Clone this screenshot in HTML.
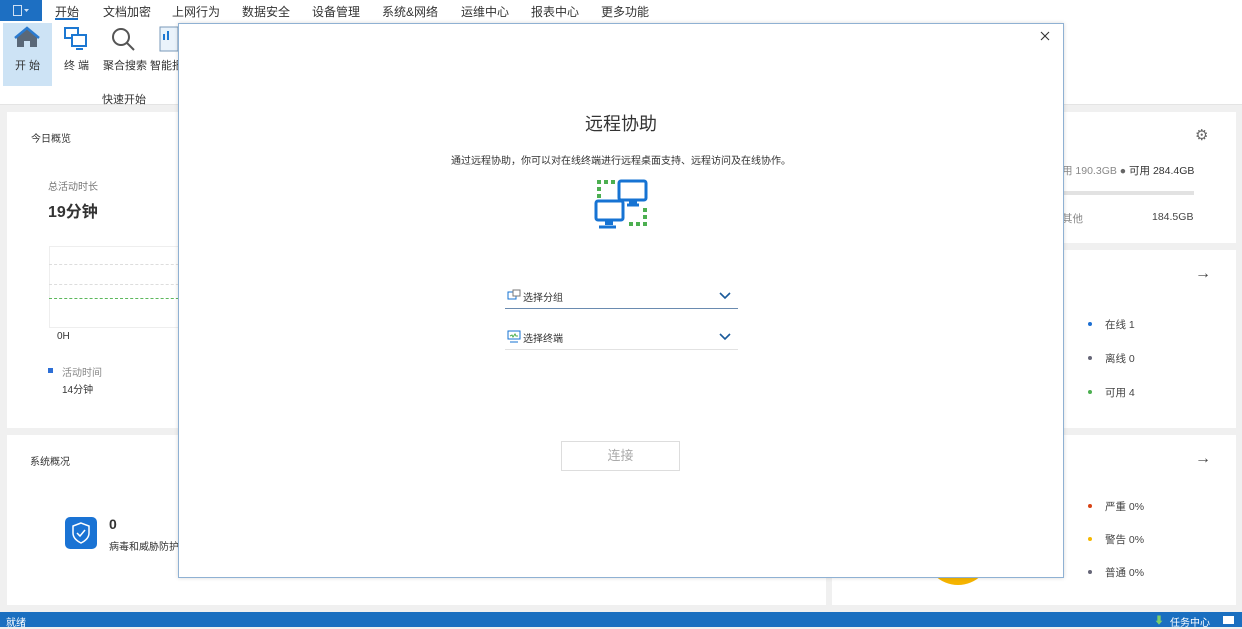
<!DOCTYPE html>
<html><head><meta charset="utf-8"><style>
*{margin:0;padding:0;box-sizing:border-box}
body{width:1242px;height:627px;overflow:hidden;background:#f0f0f0;font-family:"Liberation Sans","Noto Sans CJK SC",sans-serif;color:#333;position:relative;font-size:10px}
.a{position:absolute}
.card{position:absolute;background:#fff}
.menu{top:0;left:0;width:1242px;height:21px;background:#fff}
.menu span{position:absolute;top:3px;font-size:12px;color:#333}
.ribbon{top:21px;left:0;width:1242px;height:84px;background:#fff;border-bottom:1px solid #e4e4e4}
.dot{position:absolute;width:4px;height:4px;border-radius:50%}
.t11{font-size:11px}
.lg{font-size:10.5px;color:#444}
</style></head><body>
<div class="a menu">
 <div class="a" style="left:0;top:0;width:42px;height:21px;background:#1d6fc2"></div>
 <div class="a" style="left:13px;top:5px;width:9px;height:11px;border:1px solid #cfe0f3"></div>
 <svg class="a" style="left:24px;top:9px" width="5" height="4"><path d="M0 0h5L2.5 3z" fill="#cfe0f3"/></svg>
 <span style="left:55px">开始</span>
 <div class="a" style="left:55px;top:18px;width:23px;height:2px;background:#1d6fc2"></div>
 <span style="left:103px">文档加密</span><span style="left:172px">上网行为</span><span style="left:242px">数据安全</span><span style="left:312px">设备管理</span><span style="left:382px">系统&amp;网络</span><span style="left:461px">运维中心</span><span style="left:531px">报表中心</span><span style="left:601px">更多功能</span>
</div>
<div class="a ribbon">
 <div class="a" style="left:3px;top:2px;width:49px;height:63px;background:#cde3f5"></div>
 <svg class="a" style="left:14px;top:5px" width="26" height="22" viewBox="0 0 26 22"><path d="M13 2L3 11v10h7v-6h6v6h7V11z" fill="#5a6878"/><path d="M1 12L13 2l12 10" stroke="#2b7bd0" stroke-width="2.5" fill="none"/></svg>
 <div class="a t11" style="left:15px;top:36px">开 始</div>
 <svg class="a" style="left:63px;top:5px" width="26" height="26" viewBox="0 0 26 26" fill="none" stroke="#1d78d2" stroke-width="2"><rect x="2" y="2" width="13" height="10"/><rect x="9" y="9" width="14" height="11" fill="#fff"/><path d="M13 23h7"/></svg>
 <div class="a t11" style="left:64px;top:36px">终 端</div>
 <svg class="a" style="left:110px;top:5px" width="26" height="26" viewBox="0 0 26 26" fill="none" stroke="#555" stroke-width="2"><circle cx="11" cy="11" r="8"/><path d="M17 17l7 7"/></svg>
 <div class="a t11" style="left:103px;top:36px">聚合搜索</div>
 <svg class="a" style="left:159px;top:5px" width="20" height="26"><rect x="1" y="1" width="18" height="24" fill="#eaf3fb" stroke="#7a9ab8"/><rect x="4" y="8" width="2" height="6" fill="#1d78d2"/><rect x="8" y="5" width="2" height="9" fill="#1d78d2"/></svg>
 <div class="a t11" style="left:150px;top:36px">智能报</div>
 <div class="a t11" style="left:102px;top:70px">快速开始</div>
</div>
<div class="card" style="left:7px;top:112px;width:819px;height:316px">
 <div class="a" style="left:24px;top:18px">今日概览</div>
 <div class="a" style="left:41px;top:66px;color:#777">总活动时长</div>
 <div class="a" style="left:41px;top:86px;font-size:16px;font-weight:bold">19分钟</div>
 <div class="a" style="left:42px;top:134px;width:140px;height:82px;border:1px solid #eee;border-right:none"></div>
 <div class="a" style="left:42px;top:152px;width:140px;border-top:1px dashed #ddd"></div>
 <div class="a" style="left:42px;top:172px;width:140px;border-top:1px dashed #ddd"></div>
 <div class="a" style="left:42px;top:186px;width:140px;border-top:1px dashed #5cb85c"></div>
 <div class="a" style="left:50px;top:219px">0H</div>
 <div class="a" style="left:41px;top:256px;width:5px;height:5px;background:#2d6fd6"></div>
 <div class="a" style="left:55px;top:252px;color:#888">活动时间</div>
 <div class="a" style="left:55px;top:269px">14分钟</div>
</div>
<div class="card" style="left:7px;top:435px;width:819px;height:170px">
 <div class="a" style="left:23px;top:18px">系统概况</div>
 <div class="a" style="left:58px;top:82px;width:32px;height:32px;border-radius:5px;background:#1a73d4"></div>
 <svg class="a" style="left:64px;top:87px" width="20" height="22" viewBox="0 0 20 22" fill="none" stroke="#fff" stroke-width="1.5"><path d="M10 1L2 4v7c0 5 4 8 8 10 4-2 8-5 8-10V4z"/><path d="M6 11l3 3 5-6"/></svg>
 <div class="a" style="left:102px;top:81px;font-size:14px;font-weight:bold">0</div>
 <div class="a" style="left:102px;top:103px">病毒和威胁防护</div>
</div>
<div class="card" style="left:832px;top:112px;width:404px;height:131px">
 <div class="a" style="left:363px;top:14px;font-size:15px;color:#666">⚙</div>
 <div class="a lg" style="left:230px;top:51px;color:#888">用 190.3GB <span style="color:#666">●</span> <span style="color:#333">可用 284.4GB</span></div>
 <div class="a" style="left:230px;top:79px;width:132px;height:4px;background:#e2e2e2"></div>
 <div class="a lg" style="left:230px;top:99px;color:#888">其他</div>
 <div class="a lg" style="left:320px;top:99px">184.5GB</div>
</div>
<div class="card" style="left:832px;top:250px;width:404px;height:178px">
 <div class="a" style="left:363px;top:15px;font-size:16px;color:#444">→</div>
 <div class="dot" style="left:256px;top:72px;background:#1d6fd2"></div><div class="a lg" style="left:273px;top:67px">在线 1</div>
 <div class="dot" style="left:256px;top:106px;background:#667"></div><div class="a lg" style="left:273px;top:101px">离线 0</div>
 <div class="dot" style="left:256px;top:140px;background:#4caf50"></div><div class="a lg" style="left:273px;top:135px">可用 4</div>
</div>
<div class="card" style="left:832px;top:435px;width:404px;height:170px">
 <div class="a" style="left:363px;top:15px;font-size:16px;color:#444">→</div>
 <div class="dot" style="left:256px;top:69px;background:#d84315"></div><div class="a lg" style="left:273px;top:64px">严重 0%</div>
 <div class="dot" style="left:256px;top:102px;background:#f5b800"></div><div class="a lg" style="left:273px;top:97px">警告 0%</div>
 <div class="dot" style="left:256px;top:135px;background:#667"></div><div class="a lg" style="left:273px;top:130px">普通 0%</div>
 <div class="a" style="left:93px;top:100px;width:66px;height:50px;border-radius:0 0 33px 33px;background:#f5b400"></div>
</div>
<div class="a" style="left:0;top:612px;width:1242px;height:15px;background:#1a6fc0;color:#fff">
 <div class="a" style="left:6px;top:2px">就绪</div>
 <div class="a" style="left:1154px;top:0;color:#7ccf6a">⬇</div>
 <div class="a" style="left:1170px;top:2px">任务中心</div>
 <div class="a" style="left:1223px;top:4px;width:11px;height:8px;background:#fff"></div>
</div>
<div class="a" style="left:178px;top:23px;width:886px;height:555px;background:#fff;border:1px solid #8fb1d3;box-shadow:0 0 4px rgba(0,0,0,.15)">
 <svg class="a" style="left:861px;top:7px" width="10" height="10"><path d="M1 1l8 8M9 1l-8 8" stroke="#333" stroke-width="1.1"/></svg>
 <div class="a" style="left:0;top:86px;width:884px;text-align:center;font-size:18px;color:#333">远程协助</div>
 <div class="a" style="left:0;top:128px;width:884px;text-align:center;color:#333">通过远程协助，你可以对在线终端进行远程桌面支持、远程访问及在线协作。</div>
 <svg class="a" style="left:414px;top:154px" width="58" height="56" viewBox="0 0 58 56">
  <g fill="#4caf50"><rect x="4" y="2" width="4" height="4"/><rect x="11" y="2" width="4" height="4"/><rect x="18" y="2" width="4" height="4"/><rect x="4" y="9" width="4" height="4"/><rect x="4" y="16" width="4" height="4"/><rect x="50" y="30" width="4" height="4"/><rect x="50" y="37" width="4" height="4"/><rect x="50" y="44" width="4" height="4"/><rect x="43" y="44" width="4" height="4"/><rect x="36" y="44" width="4" height="4"/></g>
  <g fill="none" stroke="#1673d3" stroke-width="3"><rect x="26" y="3" width="27" height="19" rx="2"/><path d="M34 27h12"/><rect x="3" y="23" width="27" height="19" rx="2" fill="#fff"/><path d="M6 49h17"/></g>
  <rect x="36" y="22" width="8" height="5" fill="#1673d3"/><rect x="12" y="42" width="8" height="5" fill="#1673d3"/>
 </svg>
 <div class="a" style="left:326px;top:260px;width:233px;height:25px;border-bottom:1px solid #6a8bb0">
  <svg class="a" style="left:2px;top:5px" width="14" height="13"><rect x="1" y="3" width="8" height="7" fill="none" stroke="#1673d3"/><rect x="6" y="1" width="7" height="6" fill="#fff" stroke="#777"/></svg>
  <div class="a" style="left:18px;top:5px">选择分组</div>
  <svg class="a" style="left:214px;top:8px" width="12" height="8"><path d="M1 1l5 5 5-5" stroke="#1a5a9a" stroke-width="1.6" fill="none"/></svg>
 </div>
 <div class="a" style="left:326px;top:301px;width:233px;height:25px;border-bottom:1px solid #e2e2e2">
  <svg class="a" style="left:2px;top:5px" width="14" height="13"><rect x="1" y="1" width="12" height="8" fill="#fff" stroke="#1673d3"/><path d="M3 6l2-1 1 2 2-3 1 2h2" stroke="#4caf50" fill="none"/><path d="M3 12h8" stroke="#1673d3"/></svg>
  <div class="a" style="left:18px;top:5px">选择终端</div>
  <svg class="a" style="left:214px;top:8px" width="12" height="8"><path d="M1 1l5 5 5-5" stroke="#1a5a9a" stroke-width="1.6" fill="none"/></svg>
 </div>
 <div class="a" style="left:382px;top:417px;width:119px;height:30px;border:1px solid #ddd;text-align:center;line-height:28px;font-size:13px;color:#aaa">连接</div>
</div>
</body></html>
